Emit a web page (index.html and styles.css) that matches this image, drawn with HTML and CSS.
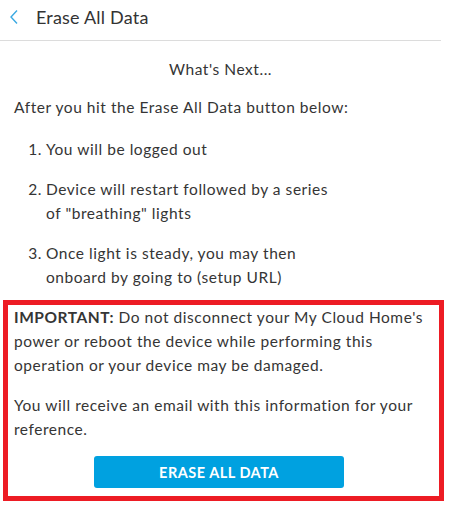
FILE: index.html
```html
<!DOCTYPE html>
<html>
<head>
<meta charset="utf-8">
<link rel="stylesheet" href="styles.css">
</head>
<body>
<div class="page">
  <header class="header">
    <svg class="back" width="10" height="16" viewBox="0 0 10 16"><path d="M8 1.5 L2 8 L8 14.5" fill="none" stroke="#3aa9e2" stroke-width="1.4"/></svg>
    <h1 class="title">Erase All Data</h1>
  </header>
  <main class="content">
    <p class="next">What's Next...</p>
    <p class="intro">After you hit the Erase All Data button below:</p>
    <div class="steps">
      <div class="step"><span class="num">1.</span><span class="txt">You will be logged out</span></div>
      <div class="step"><span class="num">2.</span><span class="txt">Device will restart followed by a series<br>of "breathing" lights</span></div>
      <div class="step"><span class="num">3.</span><span class="txt">Once light is steady, you may then<br>onboard by going to (setup URL)</span></div>
    </div>
    <section class="warn">
      <p class="warn-text"><strong>IMPORTANT:</strong> Do not disconnect your My Cloud Home's power or reboot the device while performing this operation or your device may be damaged.</p>
      <p class="warn-text second">You will receive an email with this information for your reference.</p>
      <div class="actions"><button class="erase">ERASE ALL DATA</button></div>
    </section>
  </main>
</div>
</body>
</html>
```
FILE: styles.css
```css
html, body {
  margin: 0;
  padding: 0;
  background: #fff;
}
body {
  font-family: Lato, "Open Sans", sans-serif;
  color: #353535;
}
.page {
  width: 441px;
}
.header {
  height: 41px;
  border-bottom: 1px solid #dcdcdc;
  display: flex;
  align-items: center;
  padding-left: 9px;
  box-sizing: border-box;
}
.back {
  display: block;
  margin-top: -6px;
}
.title {
  margin: -6px 0 0 17px;
  font-size: 18px;
  font-weight: 400;
  letter-spacing: 0.2px;
  color: #333;
}
.content {
  font-size: 15.5px;
  line-height: 24px;
  letter-spacing: 0.55px;
}
p {
  margin: 0;
}
.next {
  text-align: center;
  margin-top: 16px;
}
.intro {
  margin: 14px 0 0 14px;
}
.steps {
  margin-top: 18px;
  display: flex;
  flex-direction: column;
  gap: 16px;
}
.step {
  display: flex;
  padding-left: 28px;
}
.num {
  width: 14px;
  padding-right: 4px;
  text-align: right;
  flex: none;
}
.warn {
  margin: 11px 0 0 3px;
  border: 5px solid #ed1c24;
  padding: 0 6px 8px 6px;
  width: 441px;
  box-sizing: border-box;
}
.warn-text strong {
  font-weight: 700;
}
.second {
  margin-top: 16px;
}
.actions {
  display: flex;
  justify-content: center;
  margin-top: 15px;
  padding-right: 9px;
}
.erase {
  width: 250px;
  height: 32px;
  border: none;
  border-radius: 3px;
  background: #00a1e0;
  color: #fff;
  font-family: Lato, sans-serif;
  font-weight: 700;
  font-size: 14.5px;
  letter-spacing: 0.5px;
}
```
